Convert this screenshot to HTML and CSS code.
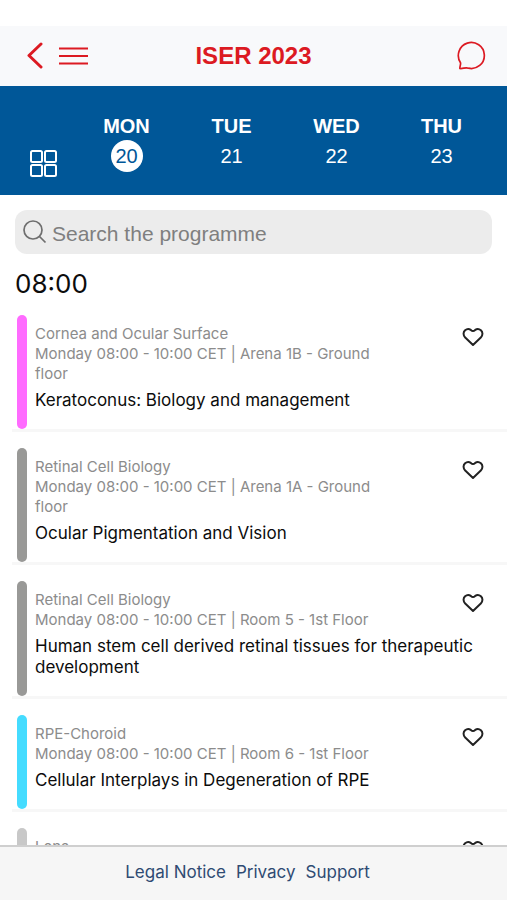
FILE: index.html
```html
<!DOCTYPE html>
<html lang="en">
<head>
<meta charset="utf-8">
<meta name="viewport" content="width=device-width, initial-scale=1">
<title>ISER 2023</title>
<link rel="stylesheet" href="styles.css">
</head>
<body>
<svg class="symbols" aria-hidden="true">
  <symbol id="heart" viewBox="0 0 22 20">
    <path d="M11 18 3.200 10.500C.9 8 1.200 4.900 3.100 3.200 5 1.600 7.400 1.900 8.800 2.900Q10 4 11 4 12 4 13.200 2.900C14.600 1.900 17 1.600 18.900 3.200 20.800 4.900 21.100 8 18.800 10.500Z"/>
  </symbol>
</svg>
<header class="topbar">
  <div class="topbar-left">
    <button class="icon-button" aria-label="Back">
      <svg width="16" height="28" viewBox="0 0 16 28"><path class="thick" d="M14 2 2 13.500 14 25"/></svg>
    </button>
    <button class="icon-button" aria-label="Menu">
      <svg width="30" height="20" viewBox="0 0 30 20"><path d="M0 2.500h29M0 10h29M0 17.500h29"/></svg>
    </button>
  </div>
  <h1 class="title">ISER 2023</h1>
  <button class="icon-button chat" aria-label="Messages">
    <svg width="30" height="30" viewBox="0 0 30 30"><path class="thin" d="M2.900 27.500C2.600 25.500 4 23.500 3.500 21.700A13 13 0 1 1 11.500 27.200C8.500 26 6 28 2.900 27.500Z"/></svg>
  </button>
</header>
<nav class="days" aria-label="Days">
  <button class="icon-button overview" aria-label="All days">
    <svg width="28" height="28" viewBox="0 0 28 28"><rect x="1" y="1" width="11" height="11" rx="1.500"/><rect x="15" y="1" width="11" height="11" rx="1.500"/><rect x="1" y="15" width="11" height="11" rx="1.500"/><rect x="15" y="15" width="11" height="11" rx="1.500"/></svg>
  </button>
  <a class="day selected" href="#mon" aria-current="date"><b>MON</b><span class="date">20</span></a>
  <a class="day" href="#tue"><b>TUE</b><span class="date">21</span></a>
  <a class="day" href="#wed"><b>WED</b><span class="date">22</span></a>
  <a class="day" href="#thu"><b>THU</b><span class="date">23</span></a>
</nav>
<main class="programme">
  <label class="search">
    <svg width="24" height="24" viewBox="0 0 24 24" aria-hidden="true"><circle cx="10" cy="10" r="9"/><path d="m16.500 16.500 6 6"/></svg>
    <input type="search" placeholder="Search the programme" aria-label="Search the programme">
  </label>
  <h2 class="time">08:00</h2>
  <ul class="sessions">
    <li class="session cornea">
      <div class="details"><p class="meta">Cornea and Ocular Surface</p><p class="meta">Monday 08:00 - 10:00 CET | Arena 1B - Ground floor</p><h3>Keratoconus: Biology and management</h3></div>
      <button class="favourite" aria-label="Add to favourites"><svg width="22" height="20"><use href="#heart"/></svg></button>
    </li>
    <li class="session retinal">
      <div class="details"><p class="meta">Retinal Cell Biology</p><p class="meta">Monday 08:00 - 10:00 CET | Arena 1A - Ground floor</p><h3>Ocular Pigmentation and Vision</h3></div>
      <button class="favourite" aria-label="Add to favourites"><svg width="22" height="20"><use href="#heart"/></svg></button>
    </li>
    <li class="session retinal">
      <div class="details"><p class="meta">Retinal Cell Biology</p><p class="meta">Monday 08:00 - 10:00 CET | Room 5 - 1st Floor</p><h3>Human stem cell derived retinal tissues for therapeutic development</h3></div>
      <button class="favourite" aria-label="Add to favourites"><svg width="22" height="20"><use href="#heart"/></svg></button>
    </li>
    <li class="session choroid">
      <div class="details"><p class="meta">RPE-Choroid</p><p class="meta">Monday 08:00 - 10:00 CET | Room 6 - 1st Floor</p><h3>Cellular Interplays in Degeneration of RPE</h3></div>
      <button class="favourite" aria-label="Add to favourites"><svg width="22" height="20"><use href="#heart"/></svg></button>
    </li>
    <li class="session lens">
      <div class="details"><p class="meta">Lens</p></div>
      <button class="favourite" aria-label="Add to favourites"><svg width="22" height="20"><use href="#heart"/></svg></button>
    </li>
  </ul>
</main>
<footer class="footer">
  <a href="#legal">Legal Notice</a>
  <a href="#privacy">Privacy</a>
  <a href="#support">Support</a>
</footer>
</body>
</html>
```
FILE: styles.css
```css
* { box-sizing: border-box; }

body {
  display: flex;
  flex-direction: column;
  height: 100vh;
  margin: 0;
  padding-top: 26px;
  background: #fff;
  color: #0c0c0c;
  font-family: Inter, sans-serif;
}

.symbols { position: absolute; width: 0; height: 0; }

h1, h2, h3, p, ul { margin: 0; padding: 0; }

button {
  padding: 0;
  border: 0;
  background: none;
  color: inherit;
  cursor: pointer;
}

svg {
  display: block;
  fill: none;
  stroke: currentColor;
  stroke-width: 2;
  stroke-linejoin: round;
}

.topbar {
  display: grid;
  grid-template-columns: 1fr auto 1fr;
  align-items: center;
  flex: none;
  height: 60px;
  padding: 0 20px;
  background: #f8f9fb;
  color: #dc1a22;
}

.topbar-left {
  display: flex;
  align-items: center;
  gap: 16px;
  padding-left: 7px;
}

.thick { stroke-width: 3; stroke-linecap: round; }
.chat { justify-self: end; }
.thin { stroke-width: 1.7; }

.title {
  font: bold 24px/30px "Liberation Sans", sans-serif;
}

.days {
  display: grid;
  grid-template-columns: 74px repeat(4, 1fr);
  flex: none;
  height: 109px;
  padding: 28px 13px 0 0;
  background: #005798;
  color: #fff;
}

.overview {
  align-self: start;
  padding: 36px 0 0 30px;
}

.day {
  display: flex;
  flex-direction: column;
  align-items: center;
  gap: 2px;
  color: inherit;
  font: 20px/24px "Liberation Sans", sans-serif;
  text-decoration: none;
}

.date {
  width: 32px;
  border-radius: 50%;
  line-height: 32px;
  text-align: center;
}

.selected .date {
  background: #fff;
  color: #005798;
}

.programme {
  flex: 1;
  min-height: 0;
  padding-top: 15px;
  overflow-y: auto;
  scrollbar-width: none;
}

.search {
  display: flex;
  align-items: center;
  gap: 5px;
  height: 44px;
  margin: 0 15px;
  padding: 0 8px;
  border-radius: 12px;
  background: #ececec;
  color: #6e6e6e;
}

.search svg { flex: none; stroke-width: 1.7; }

.search input {
  flex: 1;
  min-width: 0;
  height: 44px;
  padding: 4px 0 0;
  border: 0;
  outline: 0;
  background: none;
  color: #222;
  font: 21px "Liberation Sans", sans-serif;
}

.search input::placeholder { color: #7f7f7f; }

.time {
  padding: 13px 15px 15px;
  font-size: 26px;
  font-weight: 400;
  line-height: 33px;
}

.sessions { list-style: none; padding-left: 12px; }

.session {
  display: flex;
  align-items: flex-start;
  margin-bottom: 16px;
  padding: 0 20px 0 5px;
  border-bottom: 3px solid #f7f7f7;
}

.details {
  position: relative;
  flex: 1;
  min-width: 0;
  padding: 9px 0 18px 18px;
}

.details::before {
  content: "";
  position: absolute;
  inset: 0 auto 0 0;
  width: 10px;
  border-radius: 5px;
  background: var(--track);
}

.cornea { --track: #ff6bff; }
.retinal { --track: #999997; }
.choroid { --track: #45dcff; }
.lens { --track: #c8c8c8; }

.meta {
  padding-right: 64px;
  color: #8c8c8c;
  font-size: 15px;
  line-height: 20px;
}

/* Titles may run on below the heart, up to the row's edge. */
h3 {
  margin-top: 6px;
  margin-right: -24px;
  font-size: 17px;
  font-weight: 400;
  line-height: 21px;
}

.favourite {
  margin-top: 12px;
  margin-right: 3px;
  color: #222;
}

.footer {
  display: flex;
  justify-content: center;
  gap: 10px;
  flex: none;
  height: 55px;
  padding: 14px 12px 0 0;
  border-top: 2px solid #cfcfcf;
  background: #f6f6f6;
  font-size: 17px;
  line-height: 22px;
}

.footer a {
  color: #2f4b73;
  text-decoration: none;
}
```
